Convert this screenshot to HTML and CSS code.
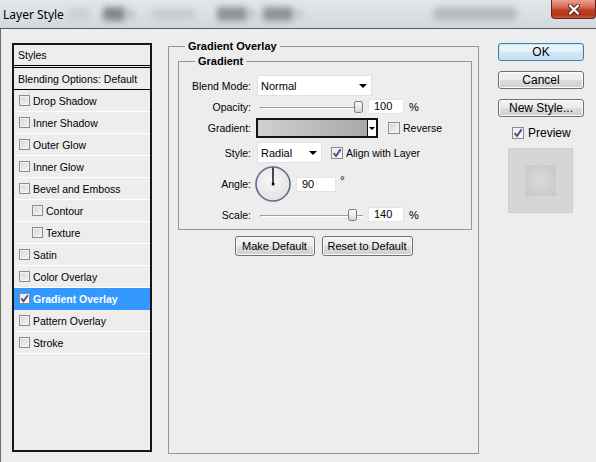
FILE: index.html
```html
<!DOCTYPE html>
<html>
<head>
<meta charset="utf-8">
<title>Layer Style</title>
<link rel="stylesheet" href="styles.css">
</head>
<body>
<div class="window">
  <div class="titlebar">
    <span class="title">Layer Style</span>
    <span class="blob b1"></span>
    <span class="blob b2"></span>
    <span class="blob b3"></span>
    <span class="blob b4"></span>
    <span class="blob b5"></span>
    <span class="blob b6"></span>
    <span class="blob b7"></span>
    <span class="blob b8"></span>
    <span class="blob b9"></span>
    <div class="close">
      <svg width="12" height="11" viewBox="0 0 12 11">
        <path d="M2 1.5 L10 9.5 M10 1.5 L2 9.5" stroke="#4a1f17" stroke-width="4.2" stroke-linecap="round" fill="none"/>
        <path d="M2 1.5 L10 9.5 M10 1.5 L2 9.5" stroke="#ffffff" stroke-width="2.4" stroke-linecap="round" fill="none"/>
      </svg>
    </div>
  </div>

  <div class="content">
    <div class="styles-panel">
      <div class="sp-head">Styles</div>
      <div class="sp-blend">Blending Options: Default</div>
      <div class="sp-row"><span class="cb"></span>Drop Shadow</div>
      <div class="sp-row"><span class="cb"></span>Inner Shadow</div>
      <div class="sp-row"><span class="cb"></span>Outer Glow</div>
      <div class="sp-row"><span class="cb"></span>Inner Glow</div>
      <div class="sp-row"><span class="cb"></span>Bevel and Emboss</div>
      <div class="sp-row sub"><span class="cb"></span>Contour</div>
      <div class="sp-row sub"><span class="cb"></span>Texture</div>
      <div class="sp-row"><span class="cb"></span>Satin</div>
      <div class="sp-row"><span class="cb"></span>Color Overlay</div>
      <div class="sp-row selected"><span class="cb checked"><svg width="11" height="11" viewBox="0 0 11 11"><path d="M2.3 5.4 L4.5 8.2 L8.8 2.2" stroke="#3b4f8c" stroke-width="1.8" fill="none"/></svg></span>Gradient Overlay</div>
      <div class="sp-row"><span class="cb"></span>Pattern Overlay</div>
      <div class="sp-row"><span class="cb"></span>Stroke</div>
    </div>

    <div class="middle">
      <fieldset class="group outer">
        <legend>Gradient Overlay</legend>
        <fieldset class="group inner">
          <legend>Gradient</legend>

          <div class="row r-blend">
            <span class="lbl">Blend Mode:</span>
            <div class="select wide"><span>Normal</span><span class="tri"></span></div>
          </div>

          <div class="row r-opacity">
            <span class="lbl">Opacity:</span>
            <div class="slider">
              <span class="track"></span>
              <svg class="thumb" style="left:97px" width="9" height="12" viewBox="0 0 9 12"><defs><linearGradient id="tg1" x1="0" y1="0" x2="0" y2="1"><stop offset="0" stop-color="#ffffff"/><stop offset="1" stop-color="#d4d4d4"/></linearGradient></defs><path d="M2 0.5 H7 Q8.5 0.5 8.5 2 V9.5 Q8.5 11.5 6.5 11.5 H2.5 Q0.5 11.5 0.5 9.5 V2 Q0.5 0.5 2 0.5 Z" fill="url(#tg1)" stroke="#7d7d7d"/></svg>
            </div>
            <div class="num">100</div>
            <span class="unit">%</span>
          </div>

          <div class="row r-gradient">
            <span class="lbl">Gradient:</span>
            <div class="gradbox"><span class="gradfill"></span><span class="gradarrow"><span class="tri small"></span></span></div>
            <span class="cb mid reverse"></span><span class="cbtext">Reverse</span>
          </div>

          <div class="row r-style">
            <span class="lbl">Style:</span>
            <div class="select narrow"><span>Radial</span><span class="tri"></span></div>
            <span class="cb mid align checked"><svg width="12" height="12" viewBox="0 0 12 12"><path d="M2.6 6 L5 9 L9.6 2.4" stroke="#3b4f8c" stroke-width="1.9" fill="none"/></svg></span><span class="cbtext">Align with Layer</span>
          </div>

          <div class="row r-angle">
            <span class="lbl">Angle:</span>
            <svg class="dial" width="38" height="38" viewBox="0 0 38 38">
              <defs><radialGradient id="dg" cx="0.45" cy="0.4" r="0.6"><stop offset="0" stop-color="#f7f7f7"/><stop offset="1" stop-color="#e2e2e2"/></radialGradient></defs>
              <circle cx="19" cy="19" r="17" fill="url(#dg)" stroke="#5e6e8e" stroke-width="1.6"/>
              <line x1="19" y1="19" x2="19" y2="2.5" stroke="#000" stroke-width="1.4"/>
              <rect x="17.8" y="17.8" width="2.6" height="2.6" fill="#000"/>
            </svg>
            <div class="num angle">90</div>
            <span class="deg">°</span>
          </div>

          <div class="row r-scale">
            <span class="lbl">Scale:</span>
            <div class="slider">
              <span class="track"></span>
              <svg class="thumb" style="left:91px" width="9" height="12" viewBox="0 0 9 12"><defs><linearGradient id="tg2" x1="0" y1="0" x2="0" y2="1"><stop offset="0" stop-color="#ffffff"/><stop offset="1" stop-color="#d4d4d4"/></linearGradient></defs><path d="M2 0.5 H7 Q8.5 0.5 8.5 2 V9.5 Q8.5 11.5 6.5 11.5 H2.5 Q0.5 11.5 0.5 9.5 V2 Q0.5 0.5 2 0.5 Z" fill="url(#tg2)" stroke="#7d7d7d"/></svg>
            </div>
            <div class="num">140</div>
            <span class="unit">%</span>
          </div>
        </fieldset>

        <div class="defaults">
          <button class="btn make">Make Default</button>
          <button class="btn reset">Reset to Default</button>
        </div>
      </fieldset>
    </div>

    <div class="right">
      <button class="btn big ok">OK</button>
      <button class="btn big">Cancel</button>
      <button class="btn big">New Style...</button>
      <div class="preview-row">
        <span class="cb mid checked"><svg width="12" height="12" viewBox="0 0 12 12"><path d="M2.6 6 L5 9 L9.6 2.4" stroke="#3b4f8c" stroke-width="1.9" fill="none"/></svg></span><span class="ptext">Preview</span>
      </div>
      <div class="preview"><span class="swatch"></span></div>
    </div>
  </div>
</div>
</body>
</html>
```

FILE: styles.css
```css
* { box-sizing: border-box; }
html, body { margin: 0; padding: 0; }
body {
  width: 596px;
  height: 462px;
  overflow: hidden;
  background: #ededed;
  font-family: "Liberation Sans", Arial, sans-serif;
  font-size: 10.5px;
  color: #000;
}
.window { display: flex; flex-direction: column; height: 462px; }

/* title bar */
.titlebar {
  flex: none;
  height: 29px;
  display: flex;
  align-items: center;
  background: linear-gradient(#e3e7eb, #d3d8dd);
  border-bottom: 1px solid #5c5c5c;
  overflow: hidden;
}
.title {
  font-family: "Noto Sans", "Liberation Sans", sans-serif;
  font-size: 12px;
  width: 57px;
  margin-left: 3px;
  white-space: nowrap;
  flex: none;
}
.blob { flex: none; height: 14px; border-radius: 3px; filter: blur(3px); }
.b1 { margin-left: 8px; width: 22px; background: #cbcfd3; height: 12px; }
.b2 { margin-left: 13px; width: 22px; background: #84878b; }
.b3 { margin-left: 3px; width: 6px; height: 6px; background: #9a9da1; }
.b4 { margin-left: 18px; width: 43px; height: 10px; background: #c6c9cd; }
.b5 { margin-left: 22px; width: 30px; background: #8f9296; }
.b6 { margin-left: 2px; width: 6px; height: 6px; background: #a7aaae; }
.b7 { margin-left: 8px; width: 30px; background: #8f9296; }
.b8 { margin-left: 3px; width: 6px; height: 6px; background: #a7aaae; }
.b9 { margin-left: 131px; width: 84px; background: #b7bbbf; border-radius: 6px; }
.close {
  flex: none;
  margin-left: auto;
  align-self: flex-start;
  width: 45px;
  height: 19px;
  border: 1px solid #6a2519;
  border-top: none;
  border-radius: 0 0 4px 4px;
  background: linear-gradient(#e8a090 0%, #d66a52 40%, #c23d24 55%, #b8361e 85%, #c85a44 100%);
  display: flex;
  align-items: center;
  justify-content: center;
}

/* content */
.content {
  flex: 1;
  display: flex;
  align-items: flex-start;
  border-left: 1px solid #6e6e6e;
  padding: 14px 0 0 11px;
}

/* styles panel */
.styles-panel {
  flex: none;
  width: 140px;
  height: 409px;
  border: 2px solid #161616;
}
.sp-head {
  height: 23px;
  padding-left: 4px;
  display: flex;
  align-items: center;
  border-bottom: 3px double #000;
}
.sp-blend {
  height: 22px;
  padding-left: 4px;
  display: flex;
  align-items: center;
  border-bottom: 1px solid #000;
}
.sp-row {
  height: 22px;
  display: flex;
  align-items: center;
  padding-left: 5px;
  border-bottom: 1px solid #ffffff;
  white-space: nowrap;
}
.sp-row.sub { padding-left: 18px; }
.sp-row.selected {
  background: #3399ff;
  border-bottom-color: #3399ff;
  color: #fff;
  font-weight: bold;
}

/* checkbox */
.cb {
  flex: none;
  width: 11px;
  height: 11px;
  margin-right: 3px;
  border: 1px solid #8c8c8c;
  background: linear-gradient(135deg, #d3d3d3, #f7f7f7);
  box-shadow: inset 0 0 0 1px #f2f2f2;
  display: flex;
  align-items: center;
  justify-content: center;
}
.cb svg { display: block; margin: -1px; }
.cb.checked { background: linear-gradient(135deg, #e9e9e9, #ffffff); }
.cb.mid { width: 12px; height: 12px; }
.cbtext { white-space: nowrap; }

/* middle */
.middle { flex: none; margin-left: 16px; margin-top: -3px; }
.group {
  margin: 0;
  padding: 0;
  border: 1px solid #979797;
  min-width: 0;
}
.group > legend {
  margin-left: 16px;
  padding: 0 3px;
  font-weight: bold;
  line-height: 13px;
  font-size: 11px;
}
.outer { width: 311px; height: 414px; }
.inner { margin: 2px 6px 0 9px; padding: 0 0 7px 0; }

.row { display: flex; align-items: center; white-space: nowrap; }
.lbl { flex: none; width: 72px; margin-right: 6px; text-align: right; }
.r-blend { margin-top: 7px; height: 21px; }
.r-opacity { margin-top: 3px; height: 15px; }
.r-gradient { margin-top: 4px; height: 20px; }
.r-style { margin-top: 4px; height: 21px; }
.r-angle { margin-top: 3px; height: 36px; }
.r-scale { margin-top: 5px; height: 15px; }

.select {
  flex: none;
  height: 21px;
  background: #fff;
  border: 1px solid #e1e1e1;
  display: flex;
  align-items: center;
  justify-content: space-between;
  padding: 0 4px 0 3px;
  font-size: 11px;
}
.select.wide { width: 115px; }
.select.narrow { width: 65px; }
.tri {
  width: 0;
  height: 0;
  border-left: 4px solid transparent;
  border-right: 4px solid transparent;
  border-top: 4px solid #000;
  margin-top: 1px;
}
.tri.small { border-left-width: 3px; border-right-width: 3px; border-top-width: 3px; }

.slider { flex: none; position: relative; width: 106px; height: 15px; margin-left: 0; }
.track {
  display: block;
  margin: 8px 0 0 3px;
  height: 2px;
  border-top: 1px solid #9e9e9e;
  border-bottom: 1px solid #ffffff;
  border-left: 1px solid #9e9e9e;
}
.thumb { position: absolute; top: 2px; display: block; }

.num {
  flex: none;
  width: 36px;
  height: 15px;
  background: #fff;
  border: 1px solid #e4e4e4;
  padding-left: 5px;
  line-height: 13px;
  margin-left: 5px;
  font-size: 11px;
}
.unit { margin-left: 5px; font-size: 11px; }

.gradbox {
  flex: none;
  width: 122px;
  height: 20px;
  border: 2px solid #141414;
  display: flex;
  margin-left: -1px;
}
.gradfill { flex: 1; background: linear-gradient(to right, #d0d0d0, #a8a8a8); }
.gradarrow {
  width: 9px;
  background: #fff;
  border-left: 1px solid #141414;
  display: flex;
  align-items: center;
  justify-content: center;
}
.cb.reverse { margin-left: 10px; }
.cb.align { margin-left: 9px; }

.dial { flex: none; margin-left: -3px; display: block; }
.num.angle { width: 40px; margin-left: 4px; }
.deg { margin-left: 4px; align-self: flex-start; margin-top: 8px; font-size: 12px; }

.defaults {
  display: flex;
  justify-content: center;
  gap: 7px;
  margin-top: 6px;
}
.btn {
  font-family: "Liberation Sans", Arial, sans-serif;
  font-size: 11px;
  color: #000;
  height: 20px;
  padding: 0;
  border: 1px solid #707070;
  border-radius: 3px;
  background: linear-gradient(#f3f3f3 0%, #ebebeb 48%, #dddddd 52%, #cfcfcf 100%);
  box-shadow: inset 0 0 0 1px #fbfbfb;
}
.btn.make { width: 80px; }
.btn.reset { width: 91px; }

/* right column */
.right {
  flex: none;
  margin-left: 19px;
  width: 86px;
  display: flex;
  flex-direction: column;
}
.btn.big { width: 86px; height: 18px; font-size: 12px; line-height: 14px; }
.btn.big + .btn.big { margin-top: 10px; }
.btn.ok {
  border-color: #3c7fb1;
  background: linear-gradient(#eef7fc 0%, #e3f0f8 48%, #d4e7f3 52%, #c9dfee 100%);
  box-shadow: inset 0 0 0 1px #c6e6f8;
}
.preview-row {
  margin-top: 9px;
  height: 14px;
  display: flex;
  align-items: center;
  padding-left: 14px;
  font-size: 12px;
}
.ptext { margin-left: 1px; }
.preview {
  margin: 8px 0 0 10px;
  width: 65px;
  height: 65px;
  background: #d6d6d6;
  border: 1px solid #cdcdcd;
  display: flex;
  align-items: center;
  justify-content: center;
}
.swatch {
  width: 31px;
  height: 31px;
  background: radial-gradient(circle, #d9d9d9 0%, #cfcfcf 60%, #c6c6c6 100%);
}
```
